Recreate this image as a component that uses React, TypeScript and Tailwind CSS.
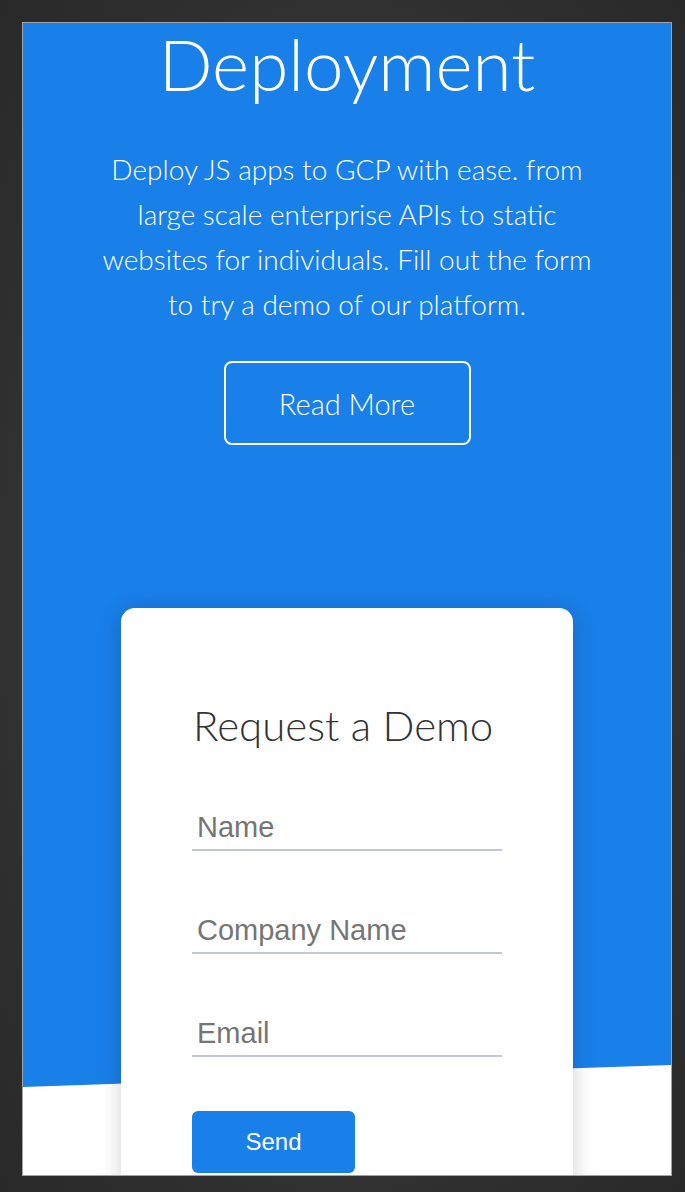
import React from 'react';

const fields = ['Name', 'Company Name', 'Email'];

const App: React.FC = () => {
  return (
    <div className="w-[685px] h-[1192px] pl-[22px] pt-[22px] bg-[radial-gradient(ellipse_at_center,#474747_0%,#2f2f2f_75%,#292929_100%)]">
      <div className="relative w-[650px] h-[1154px] border border-[#a3a3a3] bg-white overflow-hidden">
        {/* Blue backdrop with slanted bottom edge */}
        <div className="absolute inset-0 bg-[#197fe9] [clip-path:polygon(0_0,100%_0,100%_1042px,0_1064px)]" />

        <div className="relative flex flex-col items-center font-['Lato',sans-serif] text-white">
          {/* Hero */}
          <h1 className="text-[71px] leading-[82px] font-light">Deployment</h1>
          <p className="mt-[42px] w-[500px] text-center text-[28px] leading-[45px] font-light">
            Deploy JS apps to GCP with ease. from large scale enterprise APIs to static websites for individuals. Fill out the form to try a demo of our platform.
          </p>
          <button className="mt-[34px] w-[247px] h-[84px] pt-[2px] rounded-[8px] border-2 border-white text-[29px] font-light">
            Read More
          </button>

          {/* Demo form card */}
          <div className="mt-[163px] w-[452px] rounded-[14px] bg-white shadow-[0_2px_22px_rgba(0,0,0,0.18)] pt-[94px] pb-[80px] px-[71px]">
            <h2 className="text-[42px] leading-[46px] font-light text-[#333333] pl-[1px]">Request a Demo</h2>
            <form className="mt-[57px] flex flex-col gap-[57px]" onSubmit={(e) => e.preventDefault()}>
              {fields.map((label) => (
                <input
                  key={label}
                  type="text"
                  placeholder={label}
                  className="block w-full pt-[6px] pb-[5px] px-[5px] border-b-2 border-[#bfc8d3] bg-transparent outline-none font-['Liberation_Sans',Arial,sans-serif] text-[29px] leading-[33px] text-[#333] placeholder:text-[#757575]"
                />
              ))}
            </form>
            <button className="mt-[54px] w-[163px] h-[62px] rounded-[6px] bg-[#197fe9] text-white text-[24px] font-['Liberation_Sans',Arial,sans-serif]">
              Send
            </button>
          </div>
        </div>
      </div>
    </div>
  );
};

export default App;
